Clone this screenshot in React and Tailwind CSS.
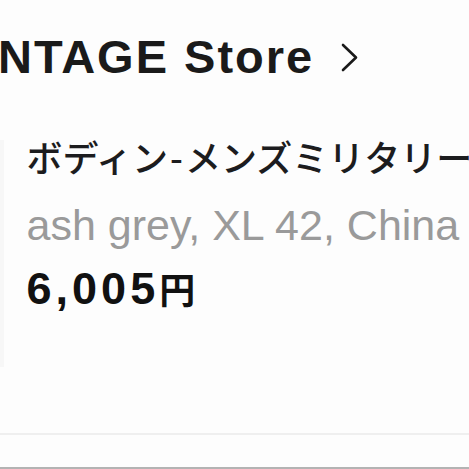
export default function App() {
  return (
    <div className="w-[469px] h-[469px] overflow-hidden bg-[#fdfdfd] flex flex-col font-['Liberation_Sans',Arial,sans-serif]">
      {/* store header */}
      <div className="pt-[33px] flex items-start whitespace-nowrap">
        <span className="ml-[-2px] text-[47px] leading-none font-bold tracking-[2px] text-[#1a1a1a]">NTAGE Store</span>
        <svg width="18" height="29" viewBox="0 0 18 29" className="ml-[27px] mt-[10px] shrink-0" fill="none">
          <polyline points="2,2 15,14.5 2,27" stroke="#1a1a1a" strokeWidth="2.6" strokeLinecap="round" strokeLinejoin="round" />
        </svg>
      </div>

      {/* item row */}
      <div className="mt-[40px] h-[247px] flex">
        <div className="w-[5px] mt-[20px] bg-[#f7f7f7]" />
        <div className="pl-[23px] pt-[18px] flex flex-col whitespace-nowrap overflow-hidden">
          <div className="text-[36px] leading-none font-medium text-[#1c1c1e] font-['Noto_Sans_CJK_JP',sans-serif]">
            ボディン<span className="mx-[2px]">-</span>メンズミリタリージャケット
          </div>
          <div className="mt-[30px] text-[43px] leading-none text-[#9a9a9a]">ash grey, XL 42, China</div>
          <div className="mt-[19px] leading-none font-bold text-[#111] flex items-baseline">
            <span className="text-[45px] tracking-[4px]">6,005</span>
            <span className="text-[36px] font-['Noto_Sans_CJK_JP',sans-serif]">円</span>
          </div>
        </div>
      </div>

      <div className="mt-[66px] h-[2px] bg-[#efefef]" />
      <div className="flex-1" />
      <div className="h-[2px] bg-[#b3b3b3]" />
    </div>
  );
}
